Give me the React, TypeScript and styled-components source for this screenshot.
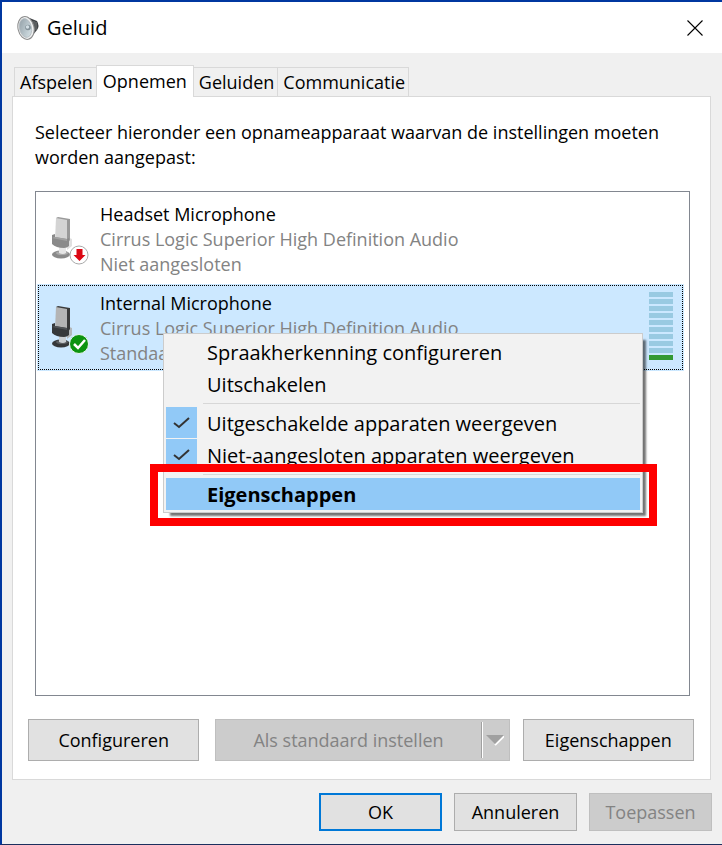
import React from "react";
import styled, { createGlobalStyle, css } from "styled-components";

const GlobalStyle = createGlobalStyle`
  *, *::before, *::after { box-sizing: border-box; }
  body {
    margin: 0;
    background: #f0f0f0;
    color: #000;
    font-family: "Open Sans", "Noto Sans", sans-serif;
    font-size: 18px;
    line-height: 25px;
  }
  button { font: inherit; color: inherit; margin: 0; padding: 0; border-radius: 0; }
`;

const Dialog = styled.main`
  display: flex;
  flex-direction: column;
  min-height: 100vh;
  background: #f0f0f0;
  border: solid #0037a0;
  border-width: 2px 0 1px 2px;
  border-bottom-color: #1b2f5e;
`;

const TitleBar = styled.header`
  display: flex;
  align-items: center;
  height: 51px;
  padding: 0 15px;
  background: #fff;
`;

const Title = styled.h1`
  flex: 1;
  margin: 0 0 0 7px;
  font-size: 20px;
  line-height: 28px;
  font-weight: 400;
`;

const CloseButton = styled.button`
  display: flex;
  align-items: center;
  justify-content: center;
  width: 24px;
  height: 24px;
  border: 0;
  background: none;
`;

const TabList = styled.div`
  display: flex;
  align-items: flex-end;
  margin-top: 12px;
  padding-left: 12px;
`;

const Tab = styled.button<{ $active?: boolean }>`
  height: 29px;
  padding: 0 3px 0 5px;
  margin-left: -1px;
  border: 1px solid #d9d9d9;
  border-bottom: 0;
  background: #f0f0f0;
  line-height: 28px;
  &:first-child { margin-left: 0; }
  ${(p) =>
    p.$active &&
    css`
      z-index: 1;
      height: 32px;
      padding: 0 6px 2px;
      margin-bottom: -1px;
      background: #fff;
    `}
`;

const Panel = styled.section`
  display: flex;
  flex: 1;
  flex-direction: column;
  margin: 0 11px 0 10px;
  padding: 23px 16px 18px 15px;
  border: 1px solid #d9d9d9;
  background: #fff;
`;

const Intro = styled.p`
  margin: 0 4px 21px 7px;
`;

const DeviceList = styled.ul`
  flex: 1;
  list-style: none;
  margin: 0 4px 23px 7px;
  padding: 3px 5px 3px 1px;
  border: 1px solid #828790;
`;

const Device = styled.li<{ $selected?: boolean }>`
  position: relative;
  display: flex;
  height: 87px;
  margin-bottom: 2px;
  padding: 7px 11px 0 15px;
  ${(p) =>
    p.$selected &&
    css`
      outline: 1px dotted #000;
      outline-offset: -2px;
      background: #cce8ff;
    `}
`;

const DeviceIcon = styled.svg`
  flex: none;
  width: 40px;
  height: 52px;
  margin-top: 15px;
`;

const DeviceText = styled.div`
  flex: 1;
  margin-left: 8px;
  white-space: nowrap;
`;

const DeviceLine = styled.div<{ $muted?: boolean }>`
  color: ${(p) => (p.$muted ? "#838383" : "#000")};
`;

const Meter = styled.div`
  display: flex;
  flex-direction: column;
  gap: 2px;
  width: 24px;
  padding-top: 1px;
`;

const MeterBar = styled.span<{ $on?: boolean }>`
  height: 5px;
  background: ${(p) => (p.$on ? "#339933" : "#99cae2")};
`;

const Menu = styled.div`
  position: absolute;
  z-index: 2;
  top: 49px;
  left: 126px;
  right: 41px;
  padding: 2px;
  border: 1px solid #ccc;
  background: #f2f2f2;
  box-shadow: 5px 5px 2px -2px rgba(0, 0, 0, 0.55);
  font-size: 20px;
`;

const MenuItem = styled.button<{ $highlight?: boolean }>`
  position: relative;
  display: flex;
  align-items: flex-start;
  width: 100%;
  height: 32px;
  border: 0;
  background: ${(p) => (p.$highlight ? "#91c9f7" : "none")};
  font-weight: ${(p) => (p.$highlight ? 700 : 400)};
  text-align: left;
  white-space: nowrap;
`;

const MenuLabel = styled.span`
  line-height: 34px;
`;

const CheckCell = styled.span<{ $checked?: boolean }>`
  display: flex;
  align-items: center;
  justify-content: center;
  width: 31px;
  height: 31px;
  margin-right: 10px;
  background: ${(p) => (p.$checked ? "#91c9f7" : "transparent")};
`;

const Separator = styled.hr`
  height: 1px;
  margin: 3px 0 3px 37px;
  border: 0;
  background: #d7d7d7;
`;

const Marker = styled.span`
  position: absolute;
  inset: -14px -17px -16px -16px;
  border: 8px solid #fe0000;
  pointer-events: none;
`;

const PanelActions = styled.div`
  display: flex;
`;

const PushButton = styled.button<{ $primary?: boolean }>`
  flex: 171 1 0;
  height: 42px;
  border: 1px solid #adadad;
  background: #e1e1e1;
  ${(p) => p.$primary && css`border: 2px solid #0078d7;`}
  &:disabled {
    border-color: #bfbfbf;
    background: #ccc;
    color: #838383;
  }
`;

const SplitButton = styled.div`
  display: flex;
  flex: 295 1 0;
  margin: 0 13px 0 16px;
  border: 1px solid #bfbfbf;
  background: #ccc;
`;

const SplitMain = styled.button`
  flex: 1;
  border: 0;
  background: none;
  &:disabled { color: #838383; }
`;

const SplitArrow = styled.button`
  display: flex;
  align-items: center;
  justify-content: center;
  width: 28px;
  margin: 2px 0;
  border: 0;
  border-left: 1px solid #a0a0a0;
  box-shadow: inset 1px 0 #fff;
  background: none;
`;

const Footer = styled.footer`
  display: flex;
  justify-content: flex-end;
  gap: 12px;
  padding: 13px 10px;
`;

const FooterButton = styled(PushButton)`
  flex: none;
  width: 123px;
  height: 38px;
`;

function SpeakerIcon() {
  return (
    <svg width="23" height="26" viewBox="0 0 23 26" aria-hidden="true">
      <defs>
        <linearGradient id="cone" x1="0" y1="0" x2="1" y2="1">
          <stop offset="0" stopColor="#8e9ba3" />
          <stop offset="0.55" stopColor="#b9c6cc" />
          <stop offset="1" stopColor="#dce8ec" />
        </linearGradient>
      </defs>
      <path d="M10 2 L15 4 L20 6 Q23 11 20 15 L16 20 L11 24 Z" fill="#3f4245" />
      <path d="M17 6 L17 18 M19 7 L19 15" stroke="#77797b" strokeWidth="1" />
      <ellipse cx="9" cy="13" rx="8" ry="11.500" transform="rotate(-12 9 13)" fill="#eef0f1" stroke="#8c8c8c" strokeWidth="1" />
      <ellipse cx="8.500" cy="13" rx="6" ry="9.500" transform="rotate(-12 8.500 13)" fill="url(#cone)" stroke="#b3babe" strokeWidth="0.800" />
      <circle cx="11" cy="12.500" r="2.800" fill="#84929a" />
      <circle cx="10.500" cy="12" r="1.700" fill="#d3dfe5" />
    </svg>
  );
}

function MicrophoneIcon({ connected }: { connected?: boolean }) {
  const dark = connected ? "#36383a" : "#8a8a8a";
  const edge = connected ? "#3a3a3a" : "#999";
  const body = connected ? "#b4b4b4" : "#d4d4d4";
  return (
    <DeviceIcon viewBox="0 0 40 52" aria-hidden="true">
      <ellipse cx="9" cy="37.500" rx="9" ry="4" fill={dark} />
      <ellipse cx="10" cy="36" rx="6" ry="2" fill={connected ? "#5b5d5f" : "#aaa"} />
      <path d="M7 29h7v7q-3 2-7 0z" fill={connected ? "#c9cdd0" : "#e6e6e6"} />
      <path d="M15 20l5 2v7l-5 4z" fill={connected ? "#b4b8ba" : "#e0e0e0"} />
      <path d="M4 1l2-1 12 2v21l-2 3z" fill={edge} />
      <path d="M4 1l11 2v22L3 23z" fill={body} />
      <path d="M0 18l3-1v3l12 2 2-1v8q-2 2-5 2Q4 31 0 27z" fill={dark} />
      <path d="M3 20l12 2v2L0 21z" fill={connected ? "#505356" : "#a1a1a1"} />
      {connected ? (
        <>
          <circle cx="27" cy="38" r="9.500" fill="#0c9410" stroke="#e9f5ef" />
          <path d="M22 38l4 4 7-8" fill="none" stroke="#fff" strokeWidth="2.500" />
        </>
      ) : (
        <>
          <circle cx="27" cy="38" r="9" fill="#fff" stroke="#aaa" />
          <path d="M24.500 32h6v6h3l-6 6-6-6h3z" fill="#dc0714" />
        </>
      )}
    </DeviceIcon>
  );
}

function CheckMark() {
  return (
    <svg width="17" height="12" viewBox="0 0 17 12" aria-hidden="true">
      <path d="M1 6l5 4L16 1" fill="none" stroke="#333" strokeWidth="2" />
    </svg>
  );
}

const meterBars = [false, false, false, false, false, false, false, false, false, true];

export default function App() {
  return (
    <>
      <GlobalStyle />
      <Dialog>
        <TitleBar>
          <SpeakerIcon />
          <Title>Geluid</Title>
          <CloseButton aria-label="Sluiten">
            <svg width="16" height="16" viewBox="0 0 16 16" aria-hidden="true">
              <path d="M0.500 0.500l15 15M15.500 0.500l-15 15" stroke="#000" strokeWidth="1.100" />
            </svg>
          </CloseButton>
        </TitleBar>

        <TabList role="tablist">
          <Tab role="tab" aria-selected={false}>Afspelen</Tab>
          <Tab role="tab" aria-selected $active>Opnemen</Tab>
          <Tab role="tab" aria-selected={false}>Geluiden</Tab>
          <Tab role="tab" aria-selected={false}>Communicatie</Tab>
        </TabList>

        <Panel role="tabpanel" aria-label="Opnemen">
          <Intro>
            Selecteer hieronder een opnameapparaat waarvan de instellingen moeten worden aangepast:
          </Intro>

          <DeviceList aria-label="Opnameapparaten">
            <Device>
              <MicrophoneIcon />
              <DeviceText>
                <DeviceLine>Headset Microphone</DeviceLine>
                <DeviceLine $muted>Cirrus Logic Superior High Definition Audio</DeviceLine>
                <DeviceLine $muted>Niet aangesloten</DeviceLine>
              </DeviceText>
            </Device>
            <Device $selected>
              <MicrophoneIcon connected />
              <DeviceText>
                <DeviceLine>Internal Microphone</DeviceLine>
                <DeviceLine $muted>Cirrus Logic Superior High Definition Audio</DeviceLine>
                <DeviceLine $muted>Standaardapparaat</DeviceLine>
              </DeviceText>
              <Meter aria-hidden="true">
                {meterBars.map((on, i) => (
                  <MeterBar key={i} $on={on} />
                ))}
              </Meter>
              <Menu role="menu">
                <MenuItem role="menuitem">
                  <CheckCell />
                  <MenuLabel>Spraakherkenning configureren</MenuLabel>
                </MenuItem>
                <MenuItem role="menuitem">
                  <CheckCell />
                  <MenuLabel>Uitschakelen</MenuLabel>
                </MenuItem>
                <Separator />
                <MenuItem role="menuitemcheckbox" aria-checked>
                  <CheckCell $checked><CheckMark /></CheckCell>
                  <MenuLabel>Uitgeschakelde apparaten weergeven</MenuLabel>
                </MenuItem>
                <MenuItem role="menuitemcheckbox" aria-checked>
                  <CheckCell $checked><CheckMark /></CheckCell>
                  <MenuLabel>Niet-aangesloten apparaten weergeven</MenuLabel>
                </MenuItem>
                <Separator />
                <MenuItem role="menuitem" $highlight>
                  <CheckCell />
                  <MenuLabel>Eigenschappen</MenuLabel>
                  <Marker />
                </MenuItem>
              </Menu>
            </Device>
          </DeviceList>

          <PanelActions>
            <PushButton>Configureren</PushButton>
            <SplitButton>
              <SplitMain disabled>Als standaard instellen</SplitMain>
              <SplitArrow disabled aria-label="Meer opties">
                <svg width="18" height="11" viewBox="0 0 18 11" aria-hidden="true">
                  <path d="M9 10l9-9" stroke="#fff" strokeWidth="2" />
                  <path d="M0 0h18l-9 9z" fill="#a0a0a0" />
                </svg>
              </SplitArrow>
            </SplitButton>
            <PushButton>Eigenschappen</PushButton>
          </PanelActions>
        </Panel>

        <Footer>
          <FooterButton $primary>OK</FooterButton>
          <FooterButton>Annuleren</FooterButton>
          <FooterButton disabled>Toepassen</FooterButton>
        </Footer>
      </Dialog>
    </>
  );
}
